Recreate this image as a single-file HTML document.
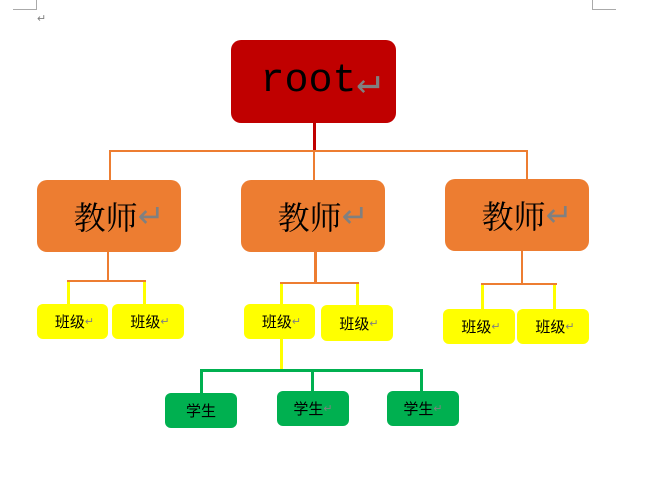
<!DOCTYPE html>
<html><head><meta charset="utf-8"><style>
body{margin:0;width:659px;height:487px;background:#fff;position:relative;overflow:hidden;font-family:"Liberation Serif","Noto Serif CJK SC",serif}
.b{position:absolute;border-radius:10px;display:flex;align-items:center;justify-content:center;color:#000}
.l{position:absolute}
.r{color:#808080}
.s{font-family:"Liberation Sans","Noto Sans CJK SC",sans-serif;font-size:15px;border-radius:6px}
.s .r{font-size:11px}
</style></head><body>
<div class="l" style="left:36px;top:0;width:1px;height:10px;background:#aaa"></div>
<div class="l" style="left:13px;top:9px;width:24px;height:1px;background:#aaa"></div>
<div class="l" style="left:592px;top:0;width:1px;height:10px;background:#aaa"></div>
<div class="l" style="left:592px;top:9px;width:24px;height:1px;background:#aaa"></div>
<div class="l r" style="left:37px;top:12px;font-size:11px">↵</div>

<div class="b" style="left:231px;top:40px;width:165px;height:83px;background:#C00000;font-size:40px;padding-left:14px;box-sizing:border-box;font-family:'Liberation Mono',monospace">root<span class="r">↵</span></div>
<div class="l" style="left:313px;top:123px;width:3px;height:29px;background:#C00000"></div>
<div class="l" style="left:109px;top:150px;width:419px;height:2px;background:#ED7D31"></div>
<div class="l" style="left:109px;top:150px;width:2px;height:30px;background:#ED7D31"></div>
<div class="l" style="left:313px;top:152px;width:2px;height:28px;background:#ED7D31"></div>
<div class="l" style="left:526px;top:150px;width:2px;height:29px;background:#ED7D31"></div>

<div class="b" style="left:37px;top:180px;width:144px;height:72px;background:#ED7D31;font-size:32px;padding-left:20px;box-sizing:border-box">教师<span class="r">↵</span></div>
<div class="b" style="left:241px;top:180px;width:144px;height:72px;background:#ED7D31;font-size:32px;padding-left:20px;box-sizing:border-box">教师<span class="r">↵</span></div>
<div class="b" style="left:445px;top:179px;width:144px;height:72px;background:#ED7D31;font-size:32px;padding-left:20px;box-sizing:border-box">教师<span class="r">↵</span></div>

<div class="l" style="left:107px;top:252px;width:2px;height:29px;background:#ED7D31"></div>
<div class="l" style="left:67px;top:280px;width:79px;height:2px;background:#ED7D31"></div>
<div class="l" style="left:67px;top:282px;width:3px;height:22px;background:#FFFF00"></div>
<div class="l" style="left:143px;top:282px;width:3px;height:22px;background:#FFFF00"></div>

<div class="l" style="left:314px;top:252px;width:3px;height:31px;background:#ED7D31"></div>
<div class="l" style="left:280px;top:282px;width:79px;height:2px;background:#ED7D31"></div>
<div class="l" style="left:280px;top:284px;width:3px;height:20px;background:#FFFF00"></div>
<div class="l" style="left:356px;top:284px;width:3px;height:21px;background:#FFFF00"></div>

<div class="l" style="left:521px;top:251px;width:2px;height:33px;background:#ED7D31"></div>
<div class="l" style="left:481px;top:283px;width:76px;height:2px;background:#ED7D31"></div>
<div class="l" style="left:481px;top:285px;width:3px;height:24px;background:#FFFF00"></div>
<div class="l" style="left:553px;top:285px;width:3px;height:24px;background:#FFFF00"></div>

<div class="b s" style="left:37px;top:304px;width:71px;height:35px;background:#FFFF00;padding-left:4px;box-sizing:border-box">班级<span class="r">↵</span></div>
<div class="b s" style="left:112px;top:304px;width:72px;height:35px;background:#FFFF00;padding-left:4px;box-sizing:border-box">班级<span class="r">↵</span></div>
<div class="b s" style="left:244px;top:304px;width:71px;height:35px;background:#FFFF00;padding-left:4px;box-sizing:border-box">班级<span class="r">↵</span></div>
<div class="b s" style="left:321px;top:305px;width:72px;height:36px;background:#FFFF00;padding-left:4px;box-sizing:border-box">班级<span class="r">↵</span></div>
<div class="b s" style="left:443px;top:309px;width:72px;height:35px;background:#FFFF00;padding-left:4px;box-sizing:border-box">班级<span class="r">↵</span></div>
<div class="b s" style="left:517px;top:309px;width:72px;height:35px;background:#FFFF00;padding-left:4px;box-sizing:border-box">班级<span class="r">↵</span></div>

<div class="l" style="left:280px;top:339px;width:3px;height:31px;background:#FFFF00"></div>
<div class="l" style="left:200px;top:369px;width:223px;height:3px;background:#00B050"></div>
<div class="l" style="left:200px;top:371px;width:3px;height:22px;background:#00B050"></div>
<div class="l" style="left:311px;top:371px;width:3px;height:20px;background:#00B050"></div>
<div class="l" style="left:420px;top:371px;width:3px;height:20px;background:#00B050"></div>

<div class="b s" style="left:165px;top:393px;width:72px;height:35px;background:#00B050">学生</div>
<div class="b s" style="left:277px;top:391px;width:72px;height:35px;background:#00B050">学生<span class="r">↵</span></div>
<div class="b s" style="left:387px;top:391px;width:72px;height:35px;background:#00B050">学生<span class="r">↵</span></div>
</body></html>
